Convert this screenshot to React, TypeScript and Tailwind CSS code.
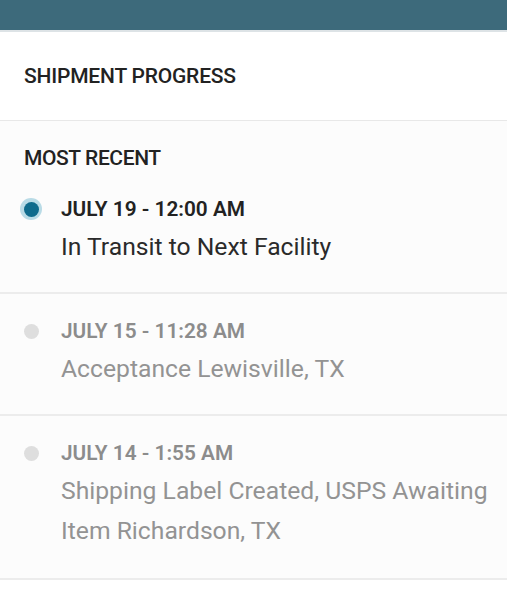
const events = [
  { date: 'JULY 19 - 12:00 AM', lines: ['In Transit to Next Facility'], active: true },
  { date: 'JULY 15 - 11:28 AM', lines: ['Acceptance Lewisville, TX'], active: false },
  { date: 'JULY 14 - 1:55 AM', lines: ['Shipping Label Created, USPS Awaiting', 'Item Richardson, TX'], active: false },
]

function Dot({ active }: { active: boolean }) {
  if (active) {
    return (
      <div className="w-[22px] h-[22px] rounded-full bg-[#b9dbe6] flex items-center justify-center">
        <div className="w-[15px] h-[15px] rounded-full bg-[#0f6b8c]" />
      </div>
    )
  }
  return (
    <div className="w-[22px] h-[22px] flex items-center justify-center">
      <div className="w-[15px] h-[15px] rounded-full bg-[#dedede]" />
    </div>
  )
}

export default function App() {
  return (
    <div className="w-[507px] h-[600px] bg-white overflow-hidden" style={{ fontFamily: 'Roboto, "Liberation Sans", sans-serif' }}>
      <div className="h-[30px] bg-[#3d6a7b]" />
      <div className="h-[2px] bg-[#dde3e6]" />
      <div className="h-[89px] flex items-center px-6 pt-[2px] border-b border-[#e8e8e8]">
        <h2 className="text-[21px] font-medium text-[#222] tracking-[-0.2px]">SHIPMENT PROGRESS</h2>
      </div>
      <div className="bg-[#fcfcfc]">
        <div className="px-6 pt-[25px] leading-[24px] text-[21px] font-medium text-[#222] tracking-[-0.4px]">
          MOST RECENT
        </div>
        <div className="h-[27px]" />
        {events.map((ev, i) => (
          <div
            key={i}
            className={`flex border-b-2 border-[#ececec] ${i > 0 ? 'pt-[25px]' : ''} ${i === events.length - 1 ? 'pb-[27px]' : 'pb-[25px]'}`}
          >
            <div className="w-[61px] flex justify-center pl-[1px]">
              <div className="h-[24px] flex items-center">
                <Dot active={ev.active} />
              </div>
            </div>
            <div>
              <div className={`text-[20.8px] leading-[24px] font-semibold ${ev.active ? 'text-[#222]' : 'text-[#8c8c8c]'}`}>
                {ev.date}
              </div>
              <div className="h-[6px]" />
              {ev.lines.map((l) => (
                <div key={l} className={`text-[24.7px] leading-[40px] ${ev.active ? 'text-[#2a2a2a]' : 'text-[#939393]'}`}>
                  {l}
                </div>
              ))}
            </div>
          </div>
        ))}
      </div>
    </div>
  )
}
